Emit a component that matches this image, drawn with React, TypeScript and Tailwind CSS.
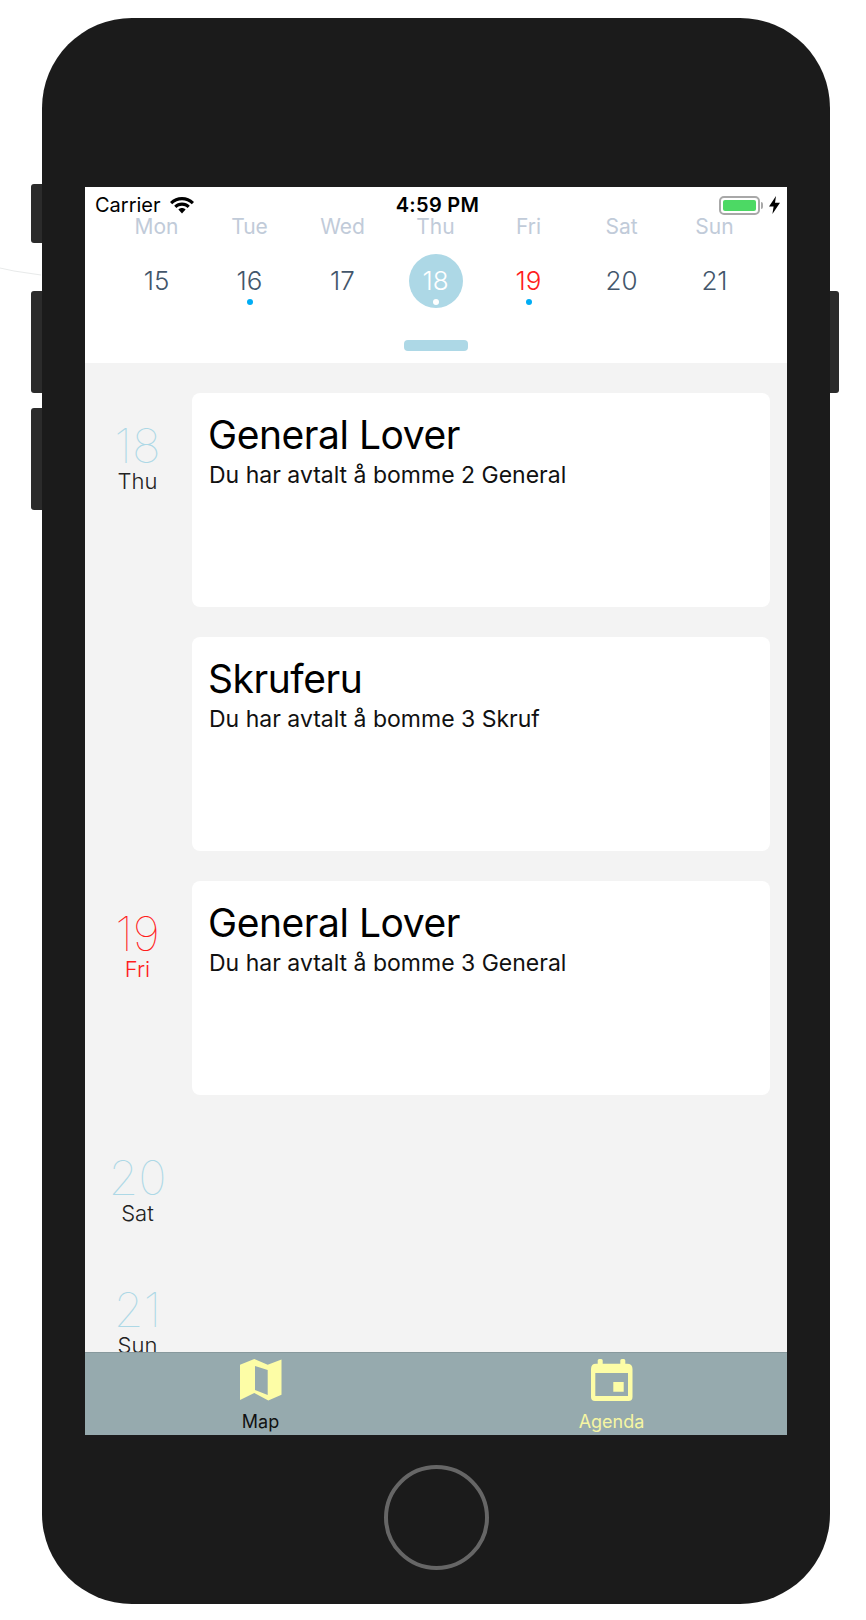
const days = [
  { name: "Mon", num: "15" },
  { name: "Tue", num: "16", dot: true },
  { name: "Wed", num: "17" },
  { name: "Thu", num: "18", selected: true, dot: true },
  { name: "Fri", num: "19", today: true, dot: true },
  { name: "Sat", num: "20" },
  { name: "Sun", num: "21" },
];

function MapIcon() {
  return (
    <svg width="42" height="42" viewBox="0 0 42 42" className="block">
      <path
        fillRule="evenodd"
        fill="#fdfda6"
        d="M0 5.7 L14.3 0 L27.7 5.7 L41.5 0.5 V35.7 L28.3 41.5 L14.3 34 L0 41 Z M15 7 V31 L27.7 36 V11 Z"
      />
    </svg>
  );
}

function CalendarIcon() {
  return (
    <svg width="42" height="42" viewBox="0 0 42 42" className="block">
      <path
        fillRule="evenodd"
        fill="#fdfda6"
        d="M5 4.7 H6.7 V1.5 Q6.7 0 8.2 0 H10.2 Q11.7 0 11.7 1.5 V4.7 H29.3 V1.5 Q29.3 0 30.8 0 H32.8 Q34.3 0 34.3 1.5 V4.7 H36 Q41.5 4.7 41.5 10 V38 Q41.5 42 37.5 42 H4 Q0 42 0 38 V10 Q0 4.7 5 4.7 Z M4.3 14 V37 H37 V14 Z M22.3 23 H32.7 V32.7 H22.3 Z"
      />
    </svg>
  );
}

function WifiIcon() {
  return (
    <svg width="24" height="17" viewBox="0 0 24 17" className="block">
      <path fill="black" d="M12 0 C16.6 0 20.6 1.8 24 5 L21.8 7.3 C19 4.7 15.7 3.2 12 3.2 C8.3 3.2 5 4.7 2.2 7.3 L0 5 C3.4 1.8 7.4 0 12 0 Z" />
      <path fill="black" d="M12 5.6 C15 5.6 17.6 6.8 19.8 8.8 L17.6 11.1 C16 9.6 14.1 8.8 12 8.8 C9.9 8.8 8 9.6 6.4 11.1 L4.2 8.8 C6.4 6.8 9 5.6 12 5.6 Z" />
      <path fill="black" d="M12 11 C13.4 11 14.6 11.5 15.6 12.5 L12 16.6 L8.4 12.5 C9.4 11.5 10.6 11 12 11 Z" />
    </svg>
  );
}

function Agenda({ num, name, red, children }: { num: string; name: string; red?: boolean; children?: React.ReactNode }) {
  return (
    <div className="flex">
      <div className="w-[105px] shrink-0 flex flex-col items-center pt-[30px]">
        <div className={`text-[48px] leading-[46px] font-thin ${red ? "text-[#ff1d1d]" : "text-[#add8e6]"}`}>{num}</div>
        <div className={`text-[22px] leading-[24px] font-light ${red ? "text-[#ff1d1d]" : "text-[#222222]"}`}>{name}</div>
      </div>
      <div className="flex-1 pl-[2px] pr-[17px]">{children}</div>
    </div>
  );
}

function Card({ title, text }: { title: string; text: string }) {
  return (
    <div className="h-[214px] mb-[30px] bg-white rounded-[8px] pl-[17px] pt-[19px]">
      <div className="ml-[-1px] text-[39px] leading-[46px] tracking-[-0.45px] text-black">{title}</div>
      <div className="text-[23px] leading-[34px] text-[#111111]">{text}</div>
    </div>
  );
}

export default function App() {
  return (
    <div className="relative w-[866px] h-[1620px] bg-white pt-[18px] pl-[42px] font-['Inter',sans-serif]">
      {/* stray line left of the phone */}
      <svg width="42" height="12" viewBox="0 0 42 12" className="absolute left-0 top-[266px]">
        <path d="M0 2 L14 5 L41 9" stroke="#e8eaea" strokeWidth="1" fill="none" />
      </svg>

      <div className="relative w-[788px] h-[1586px] rounded-[90px] bg-[#1b1b1b] pt-[169px] pl-[43px]">
        {/* side buttons */}
        <div className="absolute left-[-11px] top-[166px] w-[11px] h-[59px] rounded-l-[3px] bg-[#2b2b2b]" />
        <div className="absolute left-[-11px] top-[273px] w-[11px] h-[102px] rounded-l-[3px] bg-[#2b2b2b]" />
        <div className="absolute left-[-11px] top-[390px] w-[11px] h-[102px] rounded-l-[3px] bg-[#2b2b2b]" />
        <div className="absolute right-[-9px] top-[273px] w-[9px] h-[102px] rounded-r-[3px] bg-[#2b2b2b]" />

        <div className="w-[702px] h-[1248px] bg-[#f3f3f3] flex flex-col overflow-hidden">
          {/* status bar + calendar strip */}
          <div className="h-[176px] bg-white shrink-0 flex flex-col">
            <div className="h-[29px] shrink-0 grid grid-cols-3 items-center pl-[10px] pr-[7px] pt-[6px] text-black">
              <div className="flex items-center gap-[9px] text-[20px] leading-[24px]">
                Carrier
                <WifiIcon />
              </div>
              <div className="text-center text-[20px] leading-[24px] font-semibold tracking-[0.3px]">4:59 PM</div>
              <div className="flex items-center justify-end gap-[6px]">
                <div className="flex items-center gap-[1px]">
                  <div className="w-[41px] h-[19px] rounded-[5px] border-2 border-[#a8a8a8] p-[2px]">
                    <div className="w-full h-full rounded-[2px] bg-[#4cd964]" />
                  </div>
                  <div className="w-[2px] h-[7px] rounded-r-[2px] bg-[#a8a8a8]" />
                </div>
                <svg width="11" height="18" viewBox="0 0 11 18" className="block">
                  <path fill="black" d="M7 0 L0 10.5 H4.6 L3.4 18 L11 6.8 H6 Z" />
                </svg>
              </div>
            </div>

            <div className="grid grid-cols-7 pl-[25px] pr-[26px]">
              {days.map((d) => (
                <div key={d.name} className="flex flex-col items-center">
                  <div className="text-[21px] leading-[21px] text-[#c1cbd9]">{d.name}</div>
                  <div
                    className={`relative mt-[17px] w-[54px] h-[54px] rounded-full flex items-center justify-center ${
                      d.selected ? "bg-[#add8e6]" : ""
                    }`}
                  >
                    <span
                      className={`text-[26px] leading-[30px] font-light ${
                        d.selected ? "text-white" : d.today ? "text-[#ff1d1d]" : "text-[#43566b]"
                      }`}
                    >
                      {d.num}
                    </span>
                    {d.dot && (
                      <span
                        className={`absolute left-[24px] bottom-[3px] w-[6px] h-[6px] rounded-full ${
                          d.selected ? "bg-white" : "bg-[#00adf5]"
                        }`}
                      />
                    )}
                  </div>
                </div>
              ))}
            </div>

            <div className="mt-[32px] mx-auto w-[64px] h-[11px] rounded-[4px] bg-[#add8e6]" />
          </div>

          {/* agenda list */}
          <div className="flex-1 min-h-0 overflow-hidden pt-[30px]">
            <Agenda num="18" name="Thu">
              <Card title="General Lover" text="Du har avtalt å bomme 2 General" />
            </Agenda>
            <Agenda num="" name="">
              <Card title="Skruferu" text="Du har avtalt å bomme 3 Skruf" />
            </Agenda>
            <Agenda num="19" name="Fri" red>
              <Card title="General Lover" text="Du har avtalt å bomme 3 General" />
            </Agenda>
            <div className="h-[132px]">
              <Agenda num="20" name="Sat" />
            </div>
            <Agenda num="21" name="Sun" />
          </div>

          {/* tab bar */}
          <div className="h-[83px] shrink-0 bg-[#96aaae] border-t border-[#87999d] grid grid-cols-2">
            <div className="flex flex-col items-center pt-[6px]">
              <MapIcon />
              <div className="mt-[10px] text-[18px] leading-[22px] text-[#111111]">Map</div>
            </div>
            <div className="flex flex-col items-center pt-[6px]">
              <CalendarIcon />
              <div className="mt-[10px] text-[18px] leading-[22px] text-[#f6f6a2]">Agenda</div>
            </div>
          </div>
        </div>

        {/* home button */}
        <div className="mt-[30px] ml-[299px] w-[105px] h-[105px] rounded-full border-[4px] border-[#666666]" />
      </div>
    </div>
  );
}
